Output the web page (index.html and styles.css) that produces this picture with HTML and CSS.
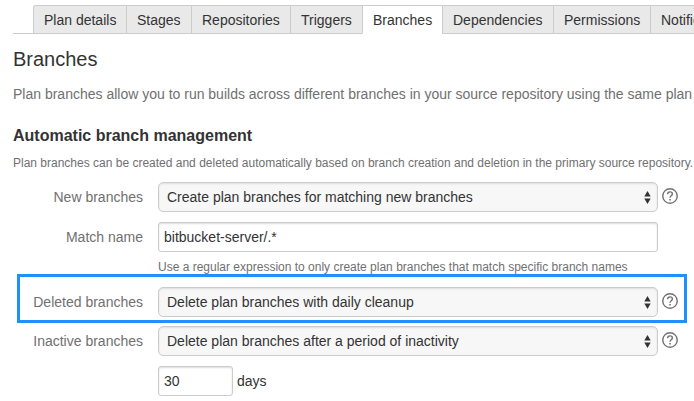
FILE: index.html
```
<!DOCTYPE html>
<html lang="en">
<head>
<meta charset="utf-8">
<title>Branches</title>
<link rel="stylesheet" href="styles.css">
</head>
<body>
<svg class="defs" width="0" height="0" aria-hidden="true">
  <symbol id="arrows" viewBox="0 0 7 13"><path d="M3.5 0 6.7 5.6H.3zM.3 7.5H6.7L3.5 13z" fill="#333"/></symbol>
  <symbol id="help" viewBox="0 0 16 16"><circle cx="8" cy="8" r="7.25" fill="none" stroke="#707070" stroke-width="1.4"/><path d="M5.6 6.2C5.6 4.7 6.6 3.9 8 3.9s2.4.8 2.4 2.1c0 1.7-2.4 1.8-2.4 3.7" fill="none" stroke="#707070" stroke-width="1.4"/><path d="M7.2 10.9h1.6v1.6H7.2z" fill="#707070"/></symbol>
</svg>
<nav class="tabs">
  <a class="tab details">Plan details</a>
  <a class="tab stages">Stages</a>
  <a class="tab repositories">Repositories</a>
  <a class="tab triggers">Triggers</a>
  <a class="tab branches active">Branches</a>
  <a class="tab dependencies">Dependencies</a>
  <a class="tab permissions">Permissions</a>
  <a class="tab notifications">Notifications</a>
</nav>
<main>
  <h1>Branches</h1>
  <p class="intro">Plan branches allow you to run builds across different branches in your source repository using the same plan</p>
  <h2>Automatic branch management</h2>
  <p class="summary">Plan branches can be created and deleted automatically based on branch creation and deletion in the primary source repository.</p>
  <form>
    <div class="row new">
      <label>New branches</label>
      <div class="control select">Create plan branches for matching new branches<svg class="arrows"><use href="#arrows"/></svg></div>
      <svg class="help"><use href="#help"/></svg>
    </div>
    <div class="row">
      <label>Match name</label>
      <div class="control">bitbucket-server/.*</div>
    </div>
    <p class="hint">Use a regular expression to only create plan branches that match specific branch names</p>
    <div class="row highlight">
      <label>Deleted branches</label>
      <div class="control select">Delete plan branches with daily cleanup<svg class="arrows"><use href="#arrows"/></svg></div>
      <svg class="help"><use href="#help"/></svg>
    </div>
    <div class="row inactive">
      <label>Inactive branches</label>
      <div class="control select">Delete plan branches after a period of inactivity<svg class="arrows"><use href="#arrows"/></svg></div>
      <svg class="help"><use href="#help"/></svg>
    </div>
    <div class="row period">
      <label></label>
      <div class="control short">30</div>
      <span class="unit">days</span>
    </div>
  </form>
</main>
</body>
</html>
```
FILE: styles.css
```
* { box-sizing: border-box; }
body {
  margin: 0;
  height: 401px;
  overflow: hidden;
  background: #fff;
  color: #333;
  font: 14px/20px "Liberation Sans", Arial, sans-serif;
}
.defs { display: block; }
h1, h2, p { margin: 0; }
.tabs {
  display: flex;
  height: 34px;
  margin-left: 13px;
  padding: 5px 0 0 20px;
  overflow: hidden;
  background: linear-gradient(#ccc, #ccc) bottom / 100% 1px no-repeat;
}
.tab {
  flex: none;
  height: 29px;
  padding-left: 10px;
  border: solid #ccc;
  border-width: 1px 0 1px 1px;
  background: #e9e9e9;
  line-height: 28px;
  white-space: nowrap;
}
.details { width: 93px; border-top-left-radius: 3px; }
.stages { width: 65px; }
.repositories { width: 99px; }
.triggers { width: 72px; }
.branches { width: 80px; }
.dependencies { width: 111px; }
.permissions { width: 97px; }
.active { background: #fff; border-bottom-color: #fff; }
main { padding-left: 13px; white-space: nowrap; }
h1 { margin-top: 13px; font-size: 20px; line-height: 24px; font-weight: 400; }
.intro { margin-top: 13px; color: #707070; }
h2 { margin-top: 22px; font-size: 16px; line-height: 20px; }
.summary { margin-top: 8px; font-size: 12px; line-height: 18px; color: #707070; }
.row { display: flex; height: 30px; margin-bottom: 10px; }
.new { margin-top: 10px; }
label {
  width: 130px;
  margin-right: 15px;
  flex: none;
  text-align: right;
  color: #707070;
  line-height: 30px;
}
.control {
  display: flex;
  align-items: center;
  width: 500px;
  height: 30px;
  padding: 0 5px;
  border: 1px solid #ccc;
  border-radius: 3px;
  box-shadow: inset 0 1px 2px #ddd;
}
.select { padding: 0 6px 0 8px; border-radius: 5px; background: #f7f7f7; }
.arrows { width: 7px; height: 13px; margin-left: auto; }
.help { width: 16px; height: 16px; margin: 6px 0 0 4px; }
.hint { margin: -4px 0 0 145px; font-size: 12px; line-height: 18px; color: #707070; }
.highlight {
  width: 670px;
  height: 49px;
  margin: -2px 0 3px 4px;
  padding-top: 10px;
  border: 3px solid #1e90ff;
}
.highlight label { width: 123px; }
.short { width: 75px; }
.unit { margin-left: 4px; line-height: 30px; }
```
